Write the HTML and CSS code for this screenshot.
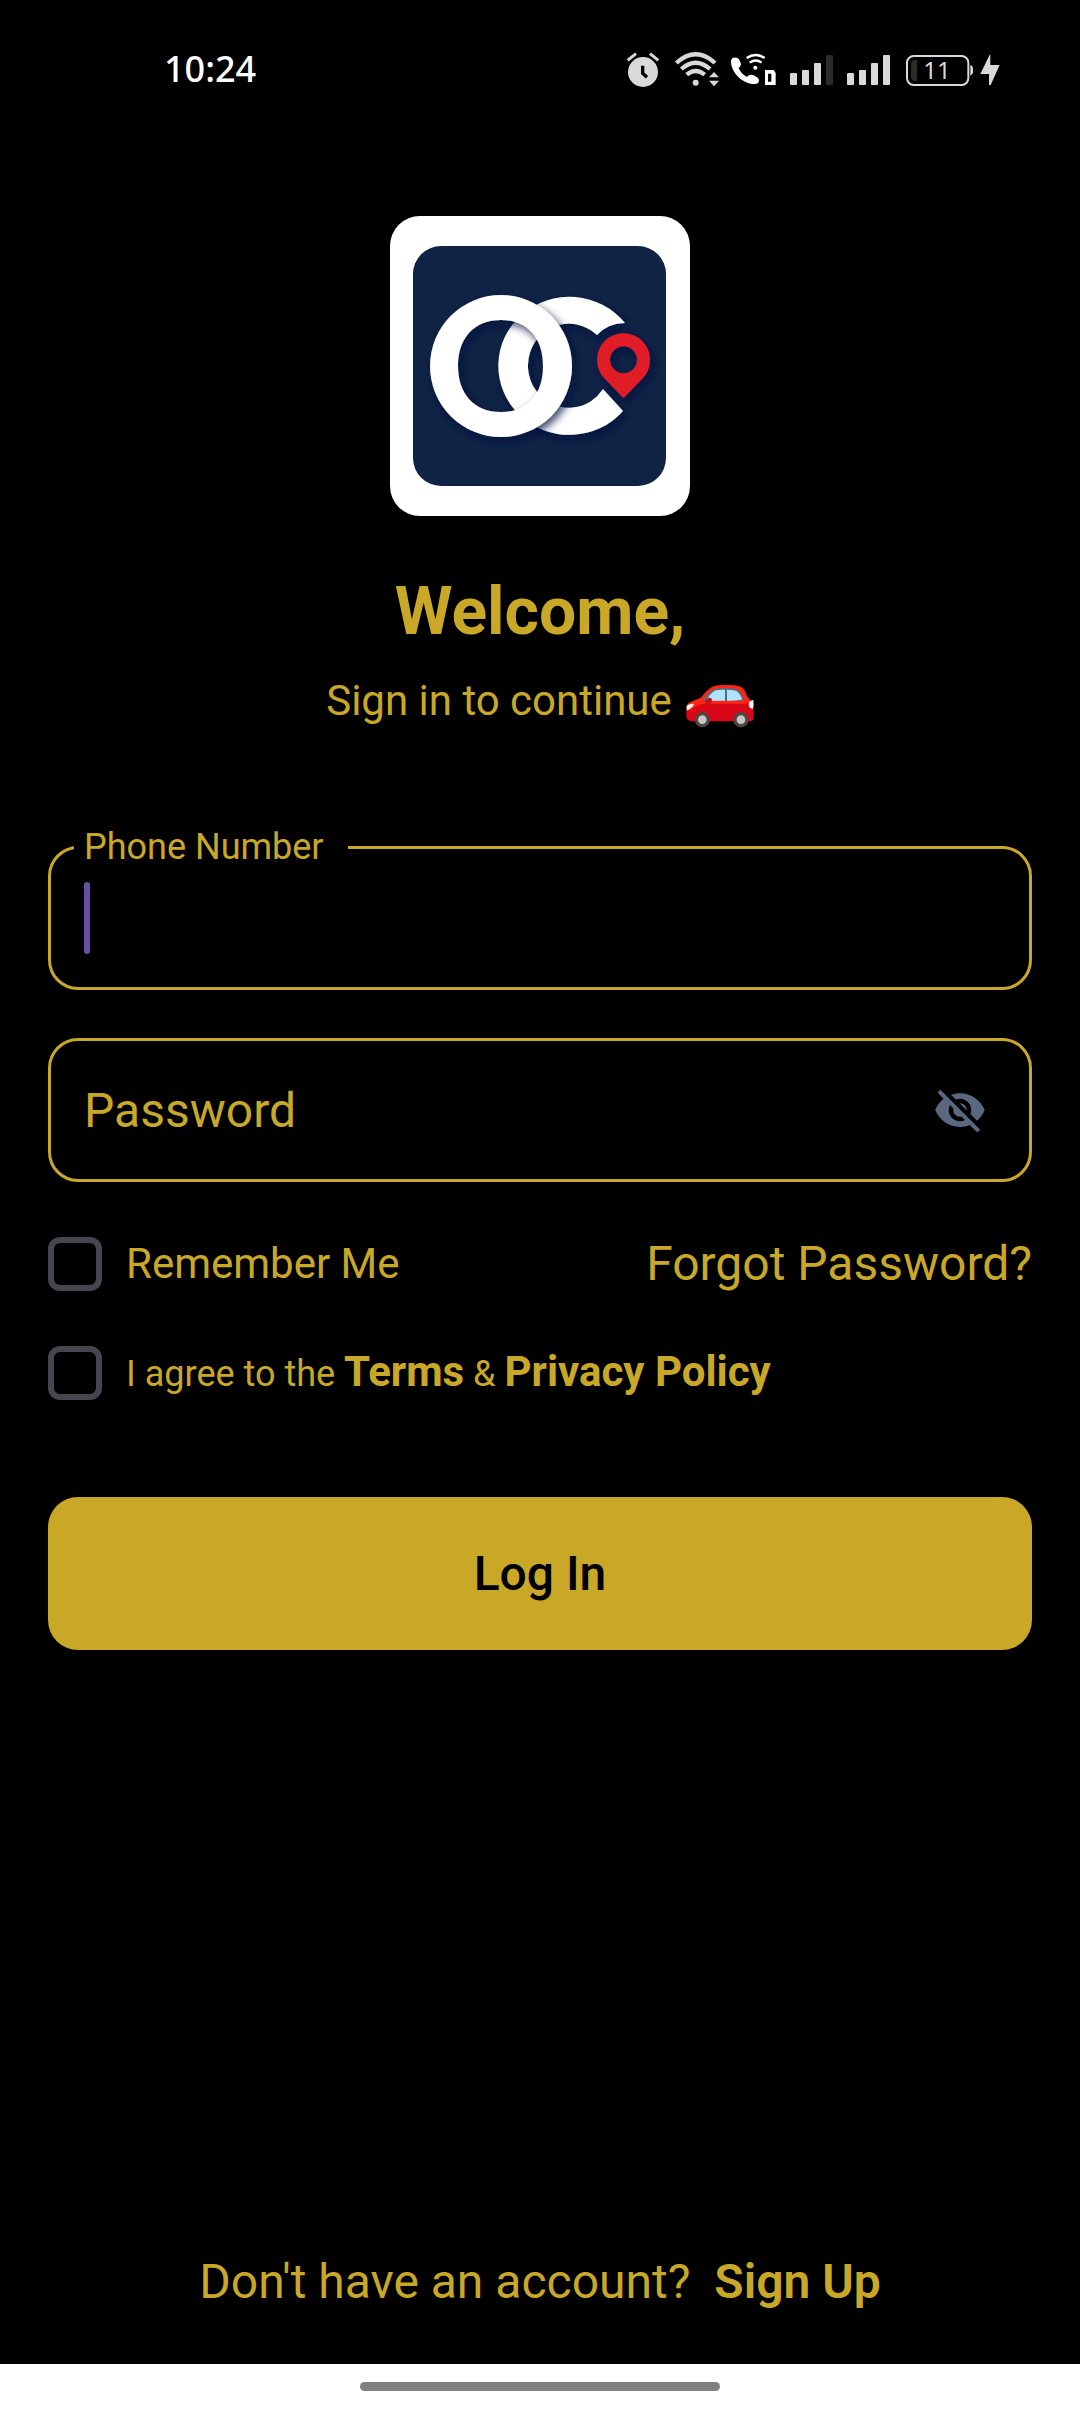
FILE: index.html
```html
<!DOCTYPE html>
<html lang="en">
<head>
<meta charset="utf-8">
<meta name="viewport" content="width=device-width, initial-scale=1">
<title>Log In</title>
<link rel="stylesheet" href="styles.css">
</head>
<body>
<header class="status">
  <time class="clock">10:24</time>
  <div class="status-icons">
    <svg width="40" height="35" viewBox="81 63 120 105" fill="#d9d9d9" aria-hidden="true">
      <circle cx="129" cy="123" r="45"/>
      <path d="M83 88l25-20M150 68l25 20" stroke="#d9d9d9" stroke-width="9"/>
      <path d="M128 104v23l13 12" fill="none" stroke="#000" stroke-width="10"/>
    </svg>
    <svg width="56" height="35" viewBox="201 63 168 105" fill="none" stroke="#d9d9d9" stroke-width="13" aria-hidden="true">
      <path d="M229 96q58-52 116 0M244 114q43-38 86 0M260 131q27-22 54 0"/>
      <circle cx="287" cy="155" r="9" fill="#d9d9d9" stroke="none"/>
      <path d="M327 139l15-16 15 16zM327 149h30l-15 17z" fill="#d9d9d9" stroke="none"/>
    </svg>
    <svg width="60" height="35" viewBox="369 63 180 105" fill="#fff" aria-hidden="true">
      <path d="M397 82c7-5 16-3 20 3l4 8c4 8 1 14-5 18 4 11 12 20 25 27 5-7 13-9 20-5l10 6c7 4 8 11 3 17-5 4-12 4-22 2-29-6-52-30-58-56-2-9-2-15 3-20z"/>
      <path d="M440 81q27-18 54 0M449 95q18-13 36 0" fill="none" stroke="#fff" stroke-width="7"/>
      <circle cx="466" cy="110" r="6"/>
      <path fill-rule="evenodd" d="M495 117h26l6 9v36h-32zM504 128v24h10v-24z"/>
    </svg>
    <svg width="57" height="35" viewBox="549 63 171 105" fill="#d9d9d9" aria-hidden="true">
      <rect x="570" y="126" width="21" height="36" rx="3"/><rect x="606" y="117" width="21" height="45" rx="3"/><rect x="642" y="96" width="21" height="66" rx="3"/><rect x="678" y="72" width="21" height="90" rx="3" fill="#2b2b2b"/>
    </svg>
    <svg width="57" height="35" viewBox="720 63 171 105" fill="#d9d9d9" aria-hidden="true">
      <rect x="741" y="126" width="21" height="36" rx="3"/><rect x="777" y="117" width="21" height="45" rx="3"/><rect x="813" y="96" width="21" height="66" rx="3"/><rect x="849" y="72" width="21" height="90" rx="3"/>
    </svg>
    <svg width="79" height="35" viewBox="891 63 237 105" role="img" aria-label="Battery 11 percent">
      <rect x="921" y="75" width="184" height="87" rx="20" fill="none" stroke="#d9d9d9" stroke-width="6"/>
      <path d="M951 87v63h-4q-14 0-14-14v-35q0-14 14-14z" fill="#2b2b2b"/>
      <path d="M1111 102q8 2 8 10v12q0 8-8 10z" fill="#d9d9d9"/>
      <text class="battery-text" x="1011" y="145" text-anchor="middle">11</text>
    </svg>
    <svg width="24" height="35" viewBox="1128 63 72 105" fill="#d9d9d9" aria-hidden="true">
      <path d="M1169 71l-28 58h26v33h5l27-60h-28V71z"/>
    </svg>
  </div>
</header>

<main class="screen">
  <svg class="logo" viewBox="0 0 300 300" role="img" aria-label="OC logo">
    <defs>
      <filter id="shade" x="-20%" y="-20%" width="150%" height="150%">
        <feDropShadow dx="3" dy="4" stdDeviation="4" flood-color="#020a40" flood-opacity="0.8"/>
      </filter>
    </defs>
    <rect width="300" height="300" rx="30" fill="#fff"/>
    <rect x="23" y="30" width="253" height="240" rx="28" fill="#0f2345"/>
    <path filter="url(#shade)" fill="#fff" d="M235 107A71 69 0 1 0 233 195L213 173A41 42 0 1 1 207 119Q218 107 235 107z"/>
    <path filter="url(#shade)" fill="#fff" fill-rule="evenodd" d="M40 150a71 71 0 1 1 142 0a71 71 0 1 1-142 0zM68 150C68 178 84 196 111 196C138 196 153 178 153 150C153 122 138 104 111 104C84 104 68 122 68 150z"/>
    <path filter="url(#shade)" fill="#e21f26" fill-rule="evenodd" d="M233.500 182L215 163Q207 155 207 143.700a26.500 26.500 0 0 1 53 0Q260 155 252 163zM220 143.700a13.500 13.500 0 1 0 27 0a13.500 13.500 0 1 0-27 0z"/>
  </svg>
  <h1 class="title">Welcome,</h1>
  <p class="subtitle">Sign in to continue
    <svg class="car" viewBox="1152 400 204 132" role="img" aria-label="car">
      <path d="M1153 470q1-11 15-17l28-11q20-25 34-33 12-6 42-6 32 0 46 7 10 6 18 30 18 11 18 33v28q0 10-10 11h-178q-13-4-13-15z" fill="#d90718"/>
      <path d="M1154 466q3-9 14-13l28-11q20-25 34-33 12-6 42-6 32 0 46 7 10 6 18 30 7 5 11 14-15 8-50 5h-86q-22 0-37 13-14 12-20-6z" fill="#ff2412"/>
      <path d="M1201 450q15-22 31-33 10-5 40-5 28 0 37 6 11 9 16 32z" fill="#546e7a"/>
      <path d="M1212 450q12-20 24-29 7-4 33-4v33zM1275 417q23 0 30 5 9 8 16 24-10 5-46 4z" fill="#b0e3fc"/>
      <path d="M1154 466q7-8 22-7-1 8-9 13-8 8-13 7zM1354 448q-14 2-14 14 1 11 13 12 3-10 1-26z" fill="#f5f5f5"/>
      <path d="M1209 455q2-13 14-14 8 1 7 11-3 10-15 9-6-1-6-6z" fill="#c5101c"/>
      <g fill="#c6c6c6" stroke="#504540" stroke-width="10"><circle cx="1201" cy="507" r="18"/><circle cx="1317" cy="507" r="18"/></g>
    </svg>
  </p>

  <form class="form">
    <div class="field">
      <input class="input" id="phone" type="tel">
      <label class="label-floating" for="phone">Phone Number</label>
      <span class="caret"></span>
    </div>
    <div class="field">
      <input class="input" id="password" type="password" placeholder="Password" aria-label="Password">
      <button class="reveal" type="button" aria-label="Show password">
        <svg width="54" height="54" viewBox="0 0 24 24" fill="#5a6780" aria-hidden="true"><path d="M12 7c2.760 0 5 2.240 5 5 0 .65-.13 1.260-.36 1.830l2.920 2.920c1.510-1.260 2.700-2.890 3.430-4.750-1.730-4.390-6-7.500-11-7.500-1.400 0-2.740.25-3.980.7l2.160 2.160C10.740 7.130 11.350 7 12 7zM2 4.270l2.280 2.280.46.46C3.080 8.300 1.780 10.020 1 12c1.730 4.390 6 7.500 11 7.500 1.550 0 3.030-.3 4.380-.84l.42.42L19.730 22 21 20.730 3.270 3 2 4.270zM7.530 9.800l1.550 1.550c-.05.21-.08.43-.08.65 0 1.660 1.340 3 3 3 .22 0 .44-.03.65-.08l1.550 1.550c-.67.33-1.410.53-2.200.53-2.760 0-5-2.240-5-5 0-.79.2-1.530.53-2.200zm4.310-.78l3.150 3.150.02-.16c0-1.660-1.340-3-3-3l-.17.01z"/></svg>
      </button>
    </div>
    <div class="row">
      <label class="check"><input class="box" type="checkbox"><span>Remember Me</span></label>
      <a class="link" href="#forgot">Forgot Password?</a>
    </div>
    <div class="check">
      <input class="box" type="checkbox" id="agree">
      <label class="terms" for="agree">I agree to the <a class="strong" href="#terms">Terms</a> &amp; <a class="strong" href="#privacy">Privacy Policy</a></label>
    </div>
    <button class="submit" type="submit">Log In</button>
  </form>

  <p class="signup">Don't have an account? <a class="signup-link" href="#signup">Sign Up</a></p>
</main>
<footer class="navbar"><div class="handle"></div></footer>
</body>
</html>
```

FILE: styles.css
```css
:root {
  --gold: #c9a827;
}

* {
  box-sizing: border-box;
}

body {
  margin: 0;
  min-height: 100vh;
  display: flex;
  flex-direction: column;
  background: #000;
  color: var(--gold);
  font-family: Roboto, "Liberation Sans", sans-serif;
  font-size: 48px;
  line-height: 56px;
}

a {
  color: inherit;
  text-decoration: none;
}

/* Status bar */
.status {
  display: flex;
  align-items: center;
  justify-content: space-between;
  height: 138px;
  padding: 0 80px 0 164px;
}

.clock {
  color: #fff;
  font-family: "Noto Sans", sans-serif;
  font-size: 36px;
  font-weight: 500;
}

.status-icons {
  display: flex;
}

.battery-text {
  fill: #d9d9d9;
  font-family: "Noto Sans", sans-serif;
  font-size: 72px;
}

/* Screen */
.screen {
  flex: 1;
  display: flex;
  flex-direction: column;
  padding: 78px 48px 54px;
}

.logo {
  width: 300px;
  height: 300px;
  align-self: center;
}

.title {
  margin: 54px 0 22px;
  font-size: 66px;
  font-weight: 700;
  line-height: 84px;
  text-align: center;
}

.subtitle {
  display: flex;
  justify-content: center;
  gap: 14px;
  margin: 0;
  font-size: 42px;
  line-height: 50px;
}

.car {
  width: 68px;
  height: 44px;
  margin-top: 8px;
}

/* Form */
.form {
  display: flex;
  flex-direction: column;
  margin-top: 118px;
}

.field {
  position: relative;
  display: flex;
  margin-bottom: 48px;
}

.input {
  width: 100%;
  height: 144px;
  padding: 0 120px 0 33px;
  border: 3px solid var(--gold);
  border-radius: 30px;
  outline: none;
  background: transparent;
  color: var(--gold);
  font: inherit;
}

.input::placeholder {
  color: var(--gold);
  opacity: 1;
}

.label-floating {
  position: absolute;
  top: -20px;
  left: 26px;
  padding: 0 24px 0 10px;
  background: #000;
  font-size: 36px;
  line-height: 42px;
}

.caret {
  position: absolute;
  top: 36px;
  left: 36px;
  width: 6px;
  height: 72px;
  border-radius: 3px;
  background: #6750a4;
}

.reveal {
  position: absolute;
  top: 45px;
  right: 45px;
  display: flex;
  padding: 0;
  border: 0;
  background: none;
}

.row {
  display: flex;
  align-items: center;
  justify-content: space-between;
  margin: 7px 0 55px;
  height: 54px;
}

.check {
  display: flex;
  align-items: center;
  gap: 24px;
  height: 54px;
  font-size: 42px;
}

.box {
  appearance: none;
  width: 54px;
  height: 54px;
  margin: 0;
  border: 6px solid #49454f;
  border-radius: 12px;
}

.terms {
  font-size: 36px;
}

.strong {
  font-size: 42px;
  font-weight: 700;
}

.submit {
  margin-top: 97px;
  height: 153px;
  border: 0;
  border-radius: 30px;
  background: var(--gold);
  color: #000;
  font: inherit;
  font-weight: 500;
}

.signup {
  display: flex;
  justify-content: center;
  gap: 24px;
  margin: auto 0 0;
}

.signup-link {
  font-weight: 600;
}

/* System navigation */
.navbar {
  display: flex;
  justify-content: center;
  padding: 18px 0 21px;
  background: #fff;
}

.handle {
  width: 360px;
  height: 9px;
  border-radius: 5px;
  background: #808080;
}
```
